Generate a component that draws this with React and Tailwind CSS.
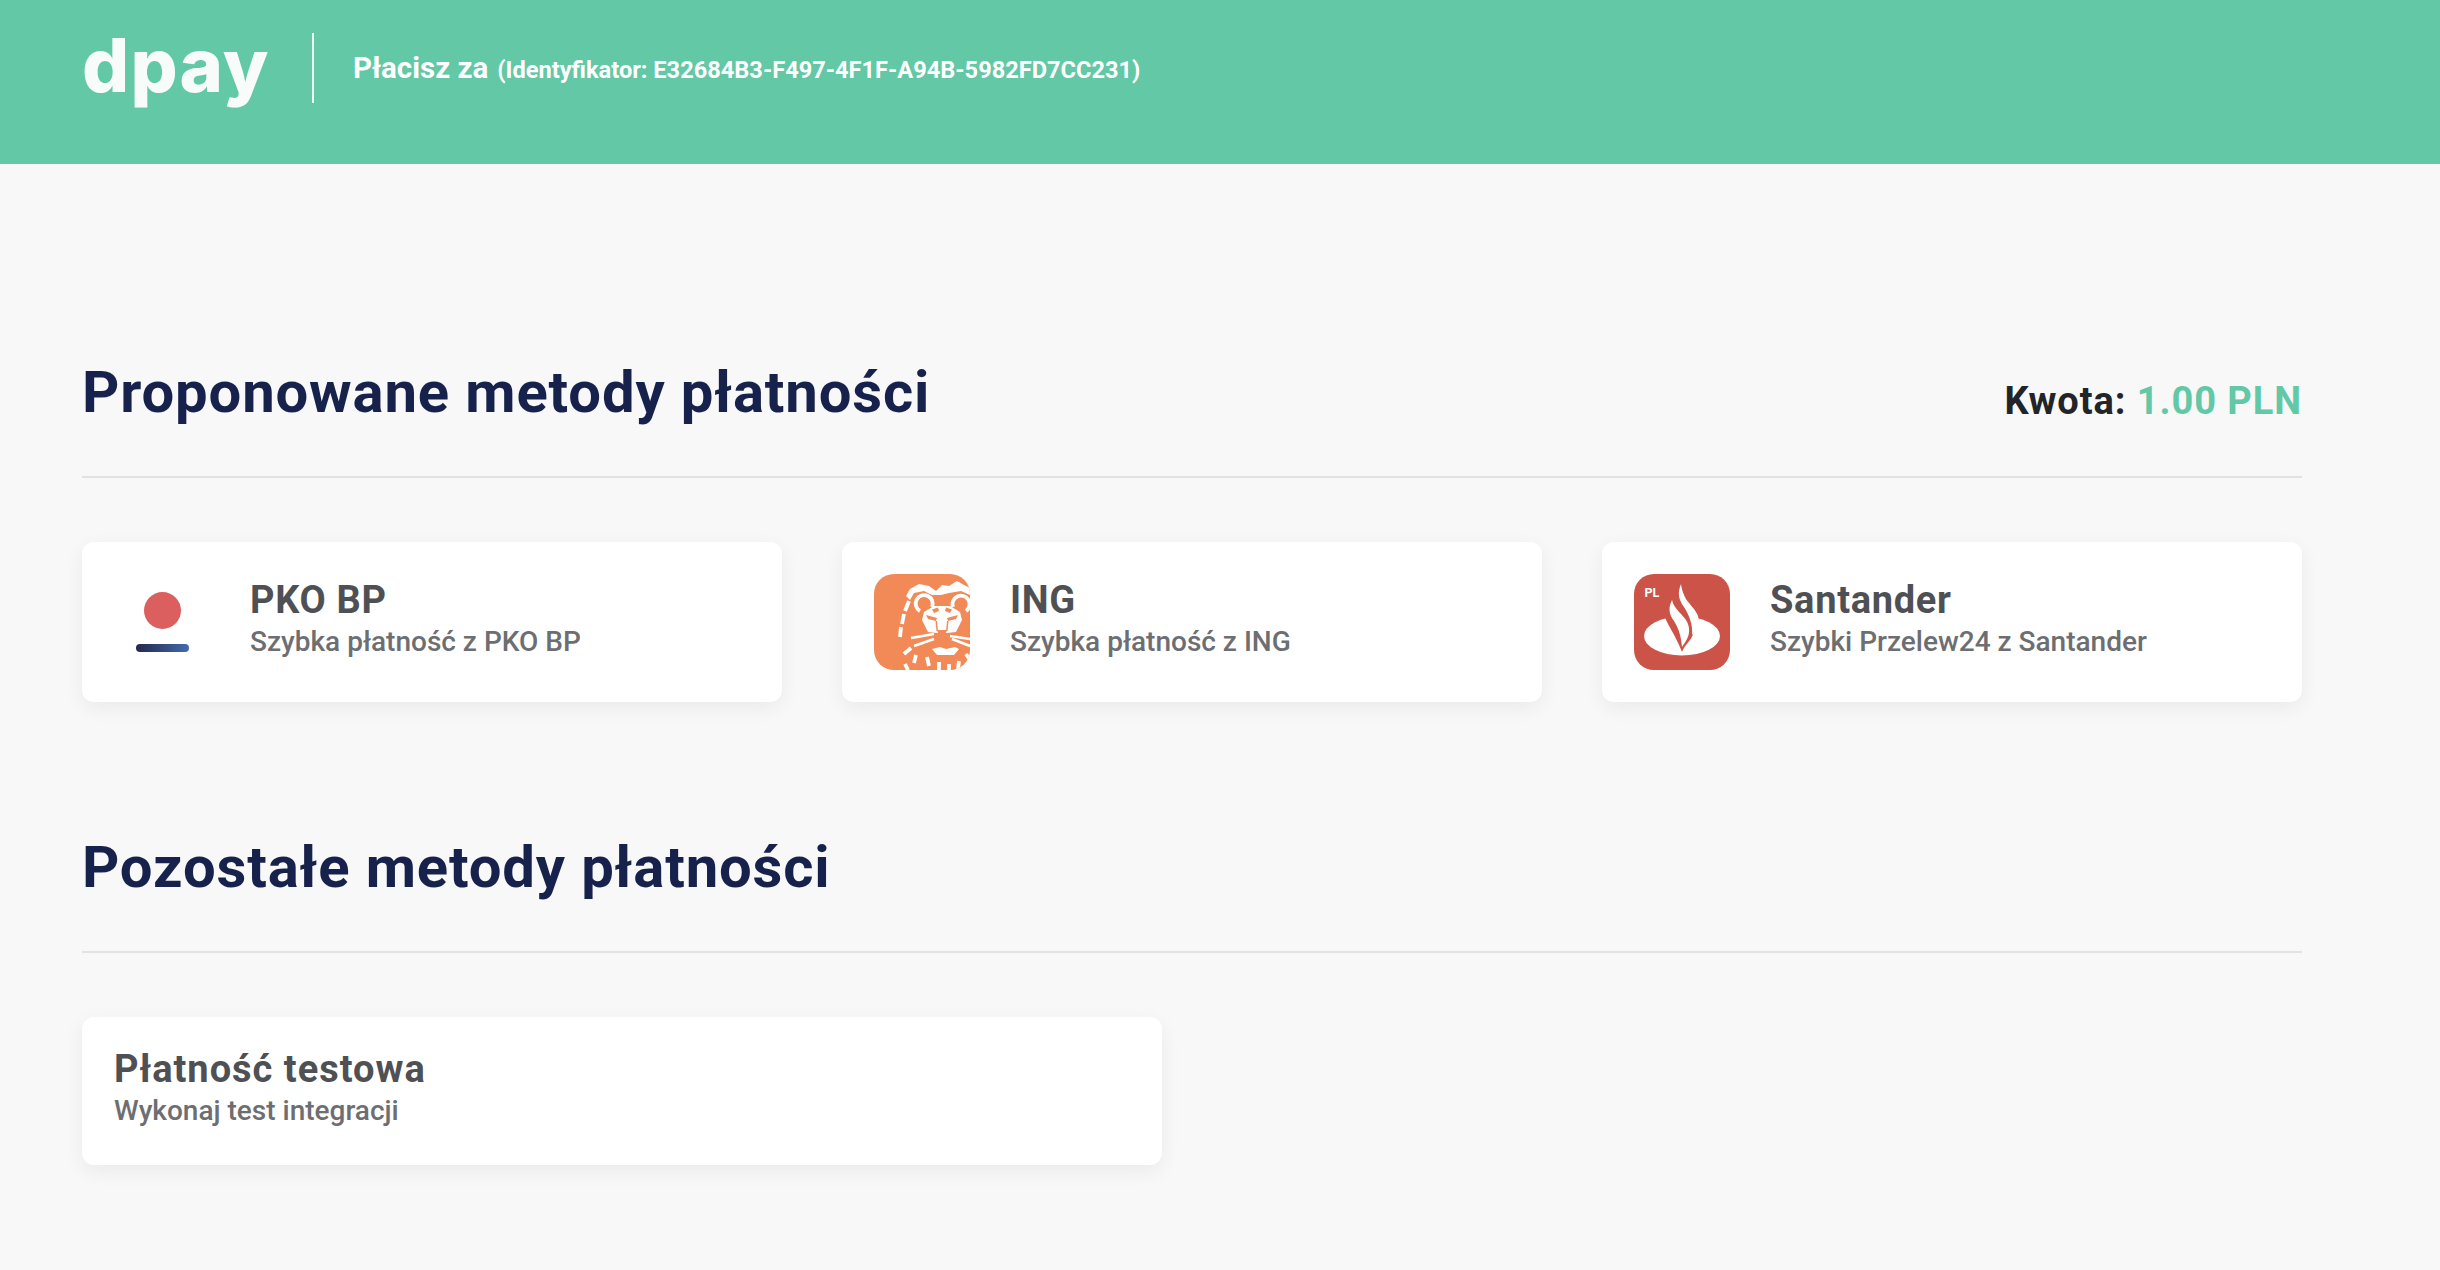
import React from 'react';

const IngLogo = () => (
  <svg viewBox="0 0 96 96" className="w-[96px] h-[96px]">
    <defs>
      <clipPath id="ing-clip"><rect width="96" height="96" rx="20" /></clipPath>
    </defs>
    <g clipPath="url(#ing-clip)">
      <rect width="96" height="96" fill="#f28a58" />
      <g fill="#fff">
        {/* mane top */}
        <path d="M36 15 L45 10 L55 12 L62 17 L68 11 L75 12 L83 7 L90 11 L96 14 L96 21 L87 17 L75 19 L67 21 L58 21 L50 17 L40 19 L36 26 L32 22 Z" />
        {/* face mask */}
        <path d="M50 38 L60 32 L76 32 L86 38 L88 46 L82 58 L73 59 L63 59 L54 58 L48 46 Z" />
        {/* muzzle */}
        <path d="M58 75 L66 73 L72 75 L81 73 L85 75 L80 81 L63 81 Z" />
      </g>
      <g fill="#f28a58">
        {/* brow, eyes, nose */}
        <path d="M58 35.500 L64 33.500 L65 37 L60 39 Z" />
        <path d="M78 35.500 L72 33.500 L71 37 L76 39 Z" />
        <path d="M52 41 L63 44 L62 47 L54 45 Z" />
        <path d="M84 41 L73 44 L74 47 L82 45 Z" />
        <path d="M61.500 47 L63 47 L64 57 L62.500 57 Z" />
        <path d="M74.500 47 L73 47 L72 57 L73.500 57 Z" />
        <path d="M63 56 L73 56 L71 61 L68 64 L65 61 Z" />
      </g>
      <g fill="none" stroke="#fff" strokeWidth="3.800" strokeLinecap="butt">
        {/* ears */}
        <path d="M46 37 A8.500 8.500 0 1 1 58 33" />
        <path d="M79 33 A8.500 8.500 0 1 1 92 37" />
        {/* whiskers */}
        <path d="M37 64 L60 60" strokeWidth="2.600" />
        <path d="M40 72 L60 65" strokeWidth="2.600" />
        <path d="M76 62 L96 65" strokeWidth="2.600" />
        <path d="M78 65 L96 72" strokeWidth="2.600" />
        {/* mane strips */}
        <path d="M35 27 L31 37" />
        <path d="M30 40 L28 50" />
        <path d="M27 53 L26 63" />
        <path d="M37 74 L30 80" />
        <path d="M42 81 L40 89" />
        <path d="M53 83 L55 92" />
        <path d="M65 88 L65 96" />
        <path d="M75 90 L75 96" />
        <path d="M85 87 L84 96" />
        <path d="M92 80 L96 86" />
        <path d="M31 90 L34 96" />
      </g>
    </g>
  </svg>
);

const SantanderLogo = () => (
  <svg viewBox="0 0 96 96" className="w-[96px] h-[96px]">
    <rect width="96" height="96" rx="20" fill="#cc5347" />
    <ellipse cx="48" cy="62" rx="38" ry="19.500" fill="#fff" />
    <path d="M31 36 L31 43 C33 50 41 60 48 78 C51 70 57 67 59 60 L66 30 L40 20 Z" fill="#cc5347" />
    <path d="M47 10 C43 20 45 26 50 33 C55 41 59 50 58 61 C62 55 66 49 64 42 C62 36 56 31 52 25 C50 21 48 17 47 10 Z" fill="#fff" />
    <path d="M38 26 C34 34 35 40 40 47 C45 55 47 62 48 73 C52 67 56 62 55 54 C54 47 50 43 45 38 C42 34 39 31 38 26 Z" fill="#fff" />
    <text x="10.500" y="23" fill="#fff" fontSize="12.500" fontWeight="700" fontFamily="Roboto, sans-serif">PL</text>
  </svg>
);

const PkoLogo = () => (
  <div className="w-[96px] h-[96px] flex flex-col items-center justify-center">
    <div className="w-[37px] h-[37px] rounded-full bg-[#dc5f5f]" />
    <div className="w-[53px] h-[8px] mt-[15px] rounded-full bg-gradient-to-r from-[#24294d] to-[#436cae]" />
  </div>
);

const MethodCard = ({ logo, title, subtitle, className, titleClass = 'tracking-[0.7px]' }) => (
  <div className={`bg-white rounded-[12px] shadow-[0_6px_20px_rgba(0,0,0,0.06)] flex items-center pl-[32px] ${className}`}>
    {logo && <div className="mr-[40px] shrink-0">{logo}</div>}
    <div className="flex flex-col">
      <span className={`text-[38px] leading-[39px] font-bold text-[#4f5054] ${titleClass}`}>{title}</span>
      <span className="text-[28px] leading-[43px] font-medium text-[#6d6e72]">{subtitle}</span>
    </div>
  </div>
);

const SectionHeader = ({ title, right }) => (
  <div className="flex justify-between items-end border-b-2 border-[#e2e2e2] h-[123px] pb-[52px]">
    <h2 className="text-[58px] leading-[64px] font-bold text-[#17224c] tracking-[0.86px]">{title}</h2>
    {right}
  </div>
);

export default function App() {
  return (
    <div className="min-h-[1270px] bg-[#f8f8f8] font-['Roboto',sans-serif]">
      <header className="h-[164px] bg-[#62c8a6] flex items-start pl-[82px] pt-[33px] text-white">
        <span className="w-[190px] font-['Inter',sans-serif] font-extrabold text-[74px] leading-[64px] tracking-[1.2px] text-white/95">dpay</span>
        <div className="w-[2px] h-[70px] bg-white/90 ml-[40px]" />
        <div className="h-[70px] flex items-baseline pt-[17px] ml-[39px] font-bold">
          <span className="text-[29.500px] leading-[36px]">Płacisz za</span>
          <span className="text-[23.600px] leading-[36px] ml-[9px]">(Identyfikator: E32684B3-F497-4F1F-A94B-5982FD7CC231)</span>
        </div>
      </header>

      <main className="pl-[82px] pr-[138px]">
        <div className="mt-[191px]">
          <SectionHeader
            title="Proponowane metody płatności"
            right={
              <span className="text-[38px] leading-[42px] font-bold tracking-[0.93px] text-[#212529] mb-[2px]">
                Kwota: <span className="text-[#62c8a6]">1.00 PLN</span>
              </span>
            }
          />
          <div className="grid grid-cols-3 gap-[60px] mt-[64px]">
            <MethodCard className="h-[160px]" logo={<PkoLogo />} title="PKO BP" subtitle="Szybka płatność z PKO BP" />
            <MethodCard className="h-[160px]" logo={<IngLogo />} title="ING" subtitle="Szybka płatność z ING" />
            <MethodCard className="h-[160px]" logo={<SantanderLogo />} title="Santander" subtitle="Szybki Przelew24 z Santander" />
          </div>
        </div>

        <div className="mt-[128px]">
          <SectionHeader title="Pozostałe metody płatności" />
          <div className="mt-[64px]">
            <MethodCard className="h-[148px] w-[1080px]" titleClass="tracking-[1px]" title="Płatność testowa" subtitle="Wykonaj test integracji" />
          </div>
        </div>
      </main>
    </div>
  );
}
